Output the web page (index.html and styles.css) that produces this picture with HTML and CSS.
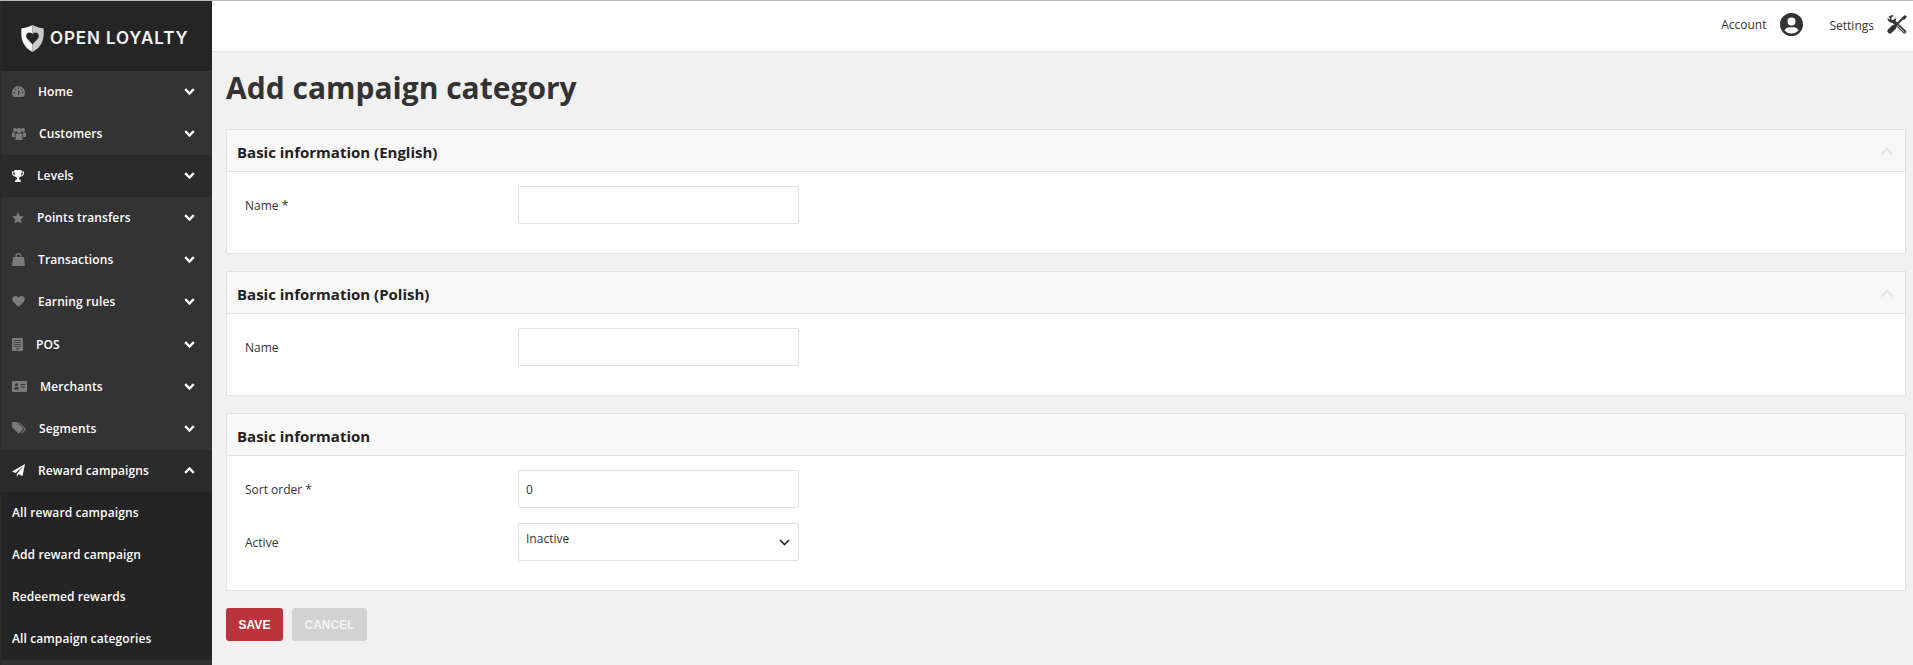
FILE: index.html
```html
<!DOCTYPE html>
<html lang="en">
<head>
<meta charset="utf-8">
<title>Add campaign category</title>
<link rel="stylesheet" href="styles.css">
</head>
<body>
<div class="app">
  <aside class="sidebar">
    <div class="logo">
      <svg class="logo-mark" width="23" height="27" viewBox="0 0 23 27"><path fill="#f6f6f6" d="M11.500 0C8 2 4 3 .5 3.200-.3 11 .2 21 11.500 27Z"/><path fill="#c9c9c9" d="M11.500 0C15 2 19 3 22.500 3.200 23.300 11 22.800 21 11.500 27Z"/><path fill="#252525" d="M11.500 19.500 6 13.500C4.200 11 5.500 7.500 8.500 7.500 9.800 7.500 10.900 8.200 11.500 9.300 12.100 8.200 13.200 7.500 14.500 7.500 17.500 7.500 18.800 11 17 13.500Z"/></svg>
      <span class="logo-text">OPEN LOYALTY</span>
    </div>
    <nav class="menu">
      <a class="item"><svg width="13" height="11" viewBox="0 0 13 11"><path class="ic" d="M6.500 0A6.500 6.500 0 0 0 0 6.500C0 8 .4 9.400 1.300 10.500c.2.300.5.500.8.500h8.800c.3 0 .6-.2.800-.5C12.600 9.400 13 8 13 6.500A6.500 6.500 0 0 0 6.500 0Z"/><path stroke="#333" stroke-width="1" d="M6.500 1.500v1.500M2.800 3 4 4.200M10.200 3 9 4.200M1.500 6.500H3M11.500 6.500H10M6.500 9 7 5"/></svg><span class="label">Home</span><svg class="chev" width="11" height="7" viewBox="0 0 11 7"><path d="M1.200 1.200 5.500 5.500 9.800 1.200"/></svg></a>
      <a class="item"><svg width="14" height="12" viewBox="0 0 14 12"><g class="ic"><circle cx="3" cy="2" r="2"/><circle cx="11" cy="2" r="2"/><circle cx="7" cy="2.500" r="2.500"/><path d="M0 4.500h2.800V9H0ZM11.200 4.500H14V9h-2.800ZM3.500 5.500h7V12h-7Z"/></g></svg><span class="label">Customers</span><svg class="chev" width="11" height="7" viewBox="0 0 11 7"><path d="M1.200 1.200 5.500 5.500 9.800 1.200"/></svg></a>
      <a class="item item-dark"><svg width="12" height="12" viewBox="0 0 12 12"><path fill="#fff" d="M2.500 0h7v1.500H12V3c0 2-1.500 3.500-3.500 3.700L7 8v1.500h1.500V11h.5v1H3v-1h.5V9.500H5V8L3.500 6.700C1.500 6.500 0 5 0 3V1.500h2.500ZM1 2.500V3c0 1.200.8 2.200 1.900 2.600-.2-1-.4-2-.4-3.100ZM11 2.500H9.500c0 1.100-.2 2.100-.4 3.100C10.200 5.200 11 4.200 11 3Z"/></svg><span class="label">Levels</span><svg class="chev" width="11" height="7" viewBox="0 0 11 7"><path d="M1.200 1.200 5.500 5.500 9.800 1.200"/></svg></a>
      <a class="item"><svg width="12" height="12" viewBox="0 0 12 12"><path class="ic" d="M6 0 7.800 3.900 12 4.400 8.900 7.300 9.700 11.500 6 9.400 2.300 11.500 3.100 7.300 0 4.400 4.200 3.900Z"/></svg><span class="label">Points transfers</span><svg class="chev" width="11" height="7" viewBox="0 0 11 7"><path d="M1.200 1.200 5.500 5.500 9.800 1.200"/></svg></a>
      <a class="item"><svg width="13" height="13" viewBox="0 0 13 13"><path class="ic" fill-rule="evenodd" d="M1 4h2.500V3a3 3 0 0 1 6 0v1H12l1 9H0ZM4.800 4h3.400V3a1.700 1.700 0 0 0-3.400 0Z"/></svg><span class="label">Transactions</span><svg class="chev" width="11" height="7" viewBox="0 0 11 7"><path d="M1.200 1.200 5.500 5.500 9.800 1.200"/></svg></a>
      <a class="item"><svg width="13" height="11" viewBox="0 0 13 11"><path class="ic" d="M6.500 11 1 5.500C-.5 3.800 0 .8 3 .1 4.500-.2 5.800.6 6.500 1.600 7.200.6 8.500-.2 10 .1c3 .7 3.500 3.700 2 5.400Z"/></svg><span class="label">Earning rules</span><svg class="chev" width="11" height="7" viewBox="0 0 11 7"><path d="M1.200 1.200 5.500 5.500 9.800 1.200"/></svg></a>
      <a class="item"><svg width="11" height="13" viewBox="0 0 11 13"><path class="ic" fill-rule="evenodd" d="M1 0h9a1 1 0 0 1 1 1v11a1 1 0 0 1-1 1H1a1 1 0 0 1-1-1V1a1 1 0 0 1 1-1ZM2 2v.8h7V2ZM2 4v.8h7V4ZM2 6v.8h7V6ZM2 8v.8h7V8ZM4.500 10.300v1.400h2v-1.400Z"/></svg><span class="label">POS</span><svg class="chev" width="11" height="7" viewBox="0 0 11 7"><path d="M1.200 1.200 5.500 5.500 9.800 1.200"/></svg></a>
      <a class="item"><svg width="15" height="11" viewBox="0 0 15 11"><path class="ic" fill-rule="evenodd" d="M1 0h13a1 1 0 0 1 1 1v9a1 1 0 0 1-1 1H1a1 1 0 0 1-1-1V1a1 1 0 0 1 1-1ZM4.500 2.300a1.500 1.500 0 1 0 0 3 1.500 1.500 0 0 0 0-3ZM2 8.500h5C7 7 6 6 4.500 6S2 7 2 8.500ZM8.500 3v1h4.500V3ZM8.500 5.500v1h4.500v-1Z"/></svg><span class="label">Merchants</span><svg class="chev" width="11" height="7" viewBox="0 0 11 7"><path d="M1.200 1.200 5.500 5.500 9.800 1.200"/></svg></a>
      <a class="item"><svg width="14" height="12" viewBox="0 0 14 12"><path class="ic" d="M0 1a1 1 0 0 1 1-1h4l6 6c.4.400.4 1 0 1.400L7.400 11c-.4.400-1 .4-1.400 0L0 5ZM7 0l6.500 6.500c.4.400.4 1 0 1.400L10 11.500 9.200 11l3-3.500c.3-.4.300-.7 0-1L6 0Z"/></svg><span class="label">Segments</span><svg class="chev" width="11" height="7" viewBox="0 0 11 7"><path d="M1.200 1.200 5.500 5.500 9.800 1.200"/></svg></a>
      <a class="item item-dark"><svg width="13" height="13" viewBox="0 0 13 13"><path fill="#fff" d="M13 0 10.500 12 6.700 10.300 4.800 13V10L11 2.500 3.500 9 0 7.500Z"/></svg><span class="label">Reward campaigns</span><svg class="chev" width="11" height="7" viewBox="0 0 11 7"><path d="M1.200 5.800 5.500 1.500 9.800 5.800"/></svg></a>
      <div class="submenu">
        <a class="subitem">All reward campaigns</a>
        <a class="subitem">Add reward campaign</a>
        <a class="subitem">Redeemed rewards</a>
        <a class="subitem">All campaign categories</a>
      </div>
    </nav>
  </aside>
  <div class="main">
    <header class="topbar">
      <span class="top-link top-account">Account</span>
      <svg class="top-icon" width="23" height="23" viewBox="0 0 23 23"><path fill="#333" fill-rule="evenodd" d="M11.500 0a11.500 11.500 0 1 0 0 23 11.500 11.500 0 0 0 0-23ZM11.500 4.500a4 4 0 1 1 0 8 4 4 0 0 1 0-8ZM11.500 20.500c-2.800 0-5.300-1.300-7-3.300 1-1.800 2.800-3 5-3h4c2.200 0 4 1.200 5 3-1.700 2-4.200 3.300-7 3.300Z"/></svg>
      <span class="top-link top-settings">Settings</span>
      <svg class="top-icon" width="20" height="19" viewBox="0 0 20 19"><path fill="#333" d="M6.800.4 4 3 4.600 4.800 6.400 5.300 9 2.800C9.500 5.300 7.800 7.800 5.500 7.800L4.700 7.700C2 7.400.2 5 .6 2.800L2.500 4.500 3.300 4 1.600 1.800C3 .3 5 -.2 6.800.4Z"/><path fill="none" stroke="#333" stroke-width="3.400" stroke-linecap="round" d="M6.500 6.500 17.500 16.800"/><path fill="none" stroke="#fff" stroke-width=".9" d="M9.500 9.800 17.500 17.200"/><path fill="none" stroke="#333" stroke-width="5" stroke-linecap="round" d="M3 16 6.800 12.300"/><path fill="none" stroke="#333" stroke-width="2" d="M7 12 16 3.300"/><path fill="#333" d="M15 2.500 18 0 20 1.800 17.300 4.700 15.500 4.500Z"/></svg>
    </header>
    <main class="content">
      <h1 class="title">Add campaign category</h1>
      <section class="panel">
        <div class="panel-head"><h2>Basic information (English)</h2><svg class="collapse" width="14" height="9" viewBox="0 0 14 9"><path d="M1.500 7.500 7 2l5.500 5.500"/></svg></div>
        <div class="panel-body">
          <div class="row"><label class="field-label">Name *</label><input class="control" type="text"></div>
        </div>
      </section>
      <section class="panel">
        <div class="panel-head"><h2>Basic information (Polish)</h2><svg class="collapse" width="14" height="9" viewBox="0 0 14 9"><path d="M1.500 7.500 7 2l5.500 5.500"/></svg></div>
        <div class="panel-body">
          <div class="row"><label class="field-label">Name</label><input class="control" type="text"></div>
        </div>
      </section>
      <section class="panel">
        <div class="panel-head"><h2>Basic information</h2></div>
        <div class="panel-body">
          <div class="row"><label class="field-label">Sort order *</label><input class="control" type="text" value="0"></div>
          <div class="row"><label class="field-label">Active</label><div class="control select"><span class="select-value">Inactive</span><svg width="11" height="7" viewBox="0 0 11 7"><path d="M1 1l4.500 4.500L10 1"/></svg></div></div>
        </div>
      </section>
      <div class="actions">
        <button class="btn btn-save" type="button">SAVE</button>
        <button class="btn btn-cancel" type="button">CANCEL</button>
      </div>
    </main>
  </div>
</div>
</body>
</html>
```
FILE: styles.css
```css
* { box-sizing: border-box; }
html, body { margin: 0; height: 100%; overflow: hidden; }
body {
  background: #f1f1f1;
  font-family: "Open Sans", "Liberation Sans", sans-serif;
  font-size: 12px;
  color: #333;
  border-top: 1px solid #b9b9b9;
}
.app { display: flex; height: 664px; }

.sidebar {
  width: 212px;
  flex: none;
  background: #303030;
  border-left: 1px solid #2a2a2a;
}
.logo {
  height: 70px;
  background: #252525;
  display: flex;
  align-items: center;
  padding: 4px 0 0 20px;
  gap: 6px;
}
.logo-mark { flex: none; }
.logo-text {
  font-family: Inter, "Liberation Sans", sans-serif;
  font-weight: 600;
  font-size: 17px;
  color: #f4f4f4;
  letter-spacing: .9px;
  white-space: nowrap;
}
.menu { display: flex; flex-direction: column; }
.item {
  height: 42.08px;
  display: flex;
  align-items: center;
  padding: 0 17px 1px 11px;
  gap: 13px;
  color: #fff;
  font-weight: 600;
  letter-spacing: .1px;
  background: #333;
}
.item-dark { background: #2b2b2b; }
.ic { fill: #7b7b7b; }
.label { flex: 1; white-space: nowrap; }
.chev { flex: none; }
.chev path { fill: none; stroke: #fff; stroke-width: 2.4; }
.submenu { background: #242424; display: flex; flex-direction: column; }
.subitem {
  height: 42.08px;
  display: flex;
  align-items: center;
  padding: 0 0 1px 11px;
  color: #fff;
  font-weight: 600;
  letter-spacing: .1px;
  white-space: nowrap;
}

.main { flex: 1; min-width: 0; display: flex; flex-direction: column; }
.topbar {
  height: 51px;
  flex: none;
  background: #fff;
  border-bottom: 1px solid #e3e3e3;
  display: flex;
  align-items: center;
  justify-content: flex-end;
  padding: 0 6px 3px 0;
}
.top-link { font-size: 12px; color: #333; }
.top-account { margin-right: 13px; }
.top-settings { margin: 2px 13px 0 27px; }
.top-icon { flex: none; }

.content { padding: 0 7px 0 14px; }
.title {
  margin: 0;
  height: 77px;
  padding-top: 15px;
  font-size: 30px;
  line-height: 41px;
  font-weight: 700;
  color: #333;
}
.panel {
  background: #fff;
  border: 1px solid #e3e3e3;
  margin-bottom: 17px;
}
.panel-head {
  height: 42px;
  background: #f8f8f8;
  border-bottom: 1px solid #e3e3e3;
  display: flex;
  align-items: center;
  justify-content: space-between;
  padding: 2px 9px 0 10px;
}
.panel-head h2 {
  margin: 0;
  font-size: 15px;
  font-weight: 700;
  color: #222;
}
.collapse { margin-right: 2px; }
.collapse path { fill: none; stroke: #e6e6e6; stroke-width: 2.6; }
.panel-body { padding: 14px 0 29px 18px; display: flex; flex-direction: column; gap: 15px; }
.row { display: flex; align-items: center; }
.field-label { width: 273px; flex: none; font-size: 12px; color: #333; }
.control {
  width: 281px;
  height: 38px;
  background: #fff;
  border: 1px solid #e0e0e0;
  border-radius: 2px;
  padding: 0 7px;
  font: 12px "Open Sans", "Liberation Sans", sans-serif;
  color: #333;
  outline: none;
}
.select { display: flex; justify-content: space-between; align-items: center; padding-right: 8px; }
.select-value { margin-top: -8px; }
.select path { fill: none; stroke: #222; stroke-width: 1.6; }
.actions { display: flex; gap: 9px; }
.btn {
  height: 33px;
  border: 0;
  border-radius: 3px;
  color: #fff;
  font: 700 12px "Liberation Sans", Arial, sans-serif;
  padding: 0;
}
.btn-save { width: 57px; background: #bd333d; }
.btn-cancel { width: 75px; background: #d2d2d2; color: #f3f3f3; }
```
